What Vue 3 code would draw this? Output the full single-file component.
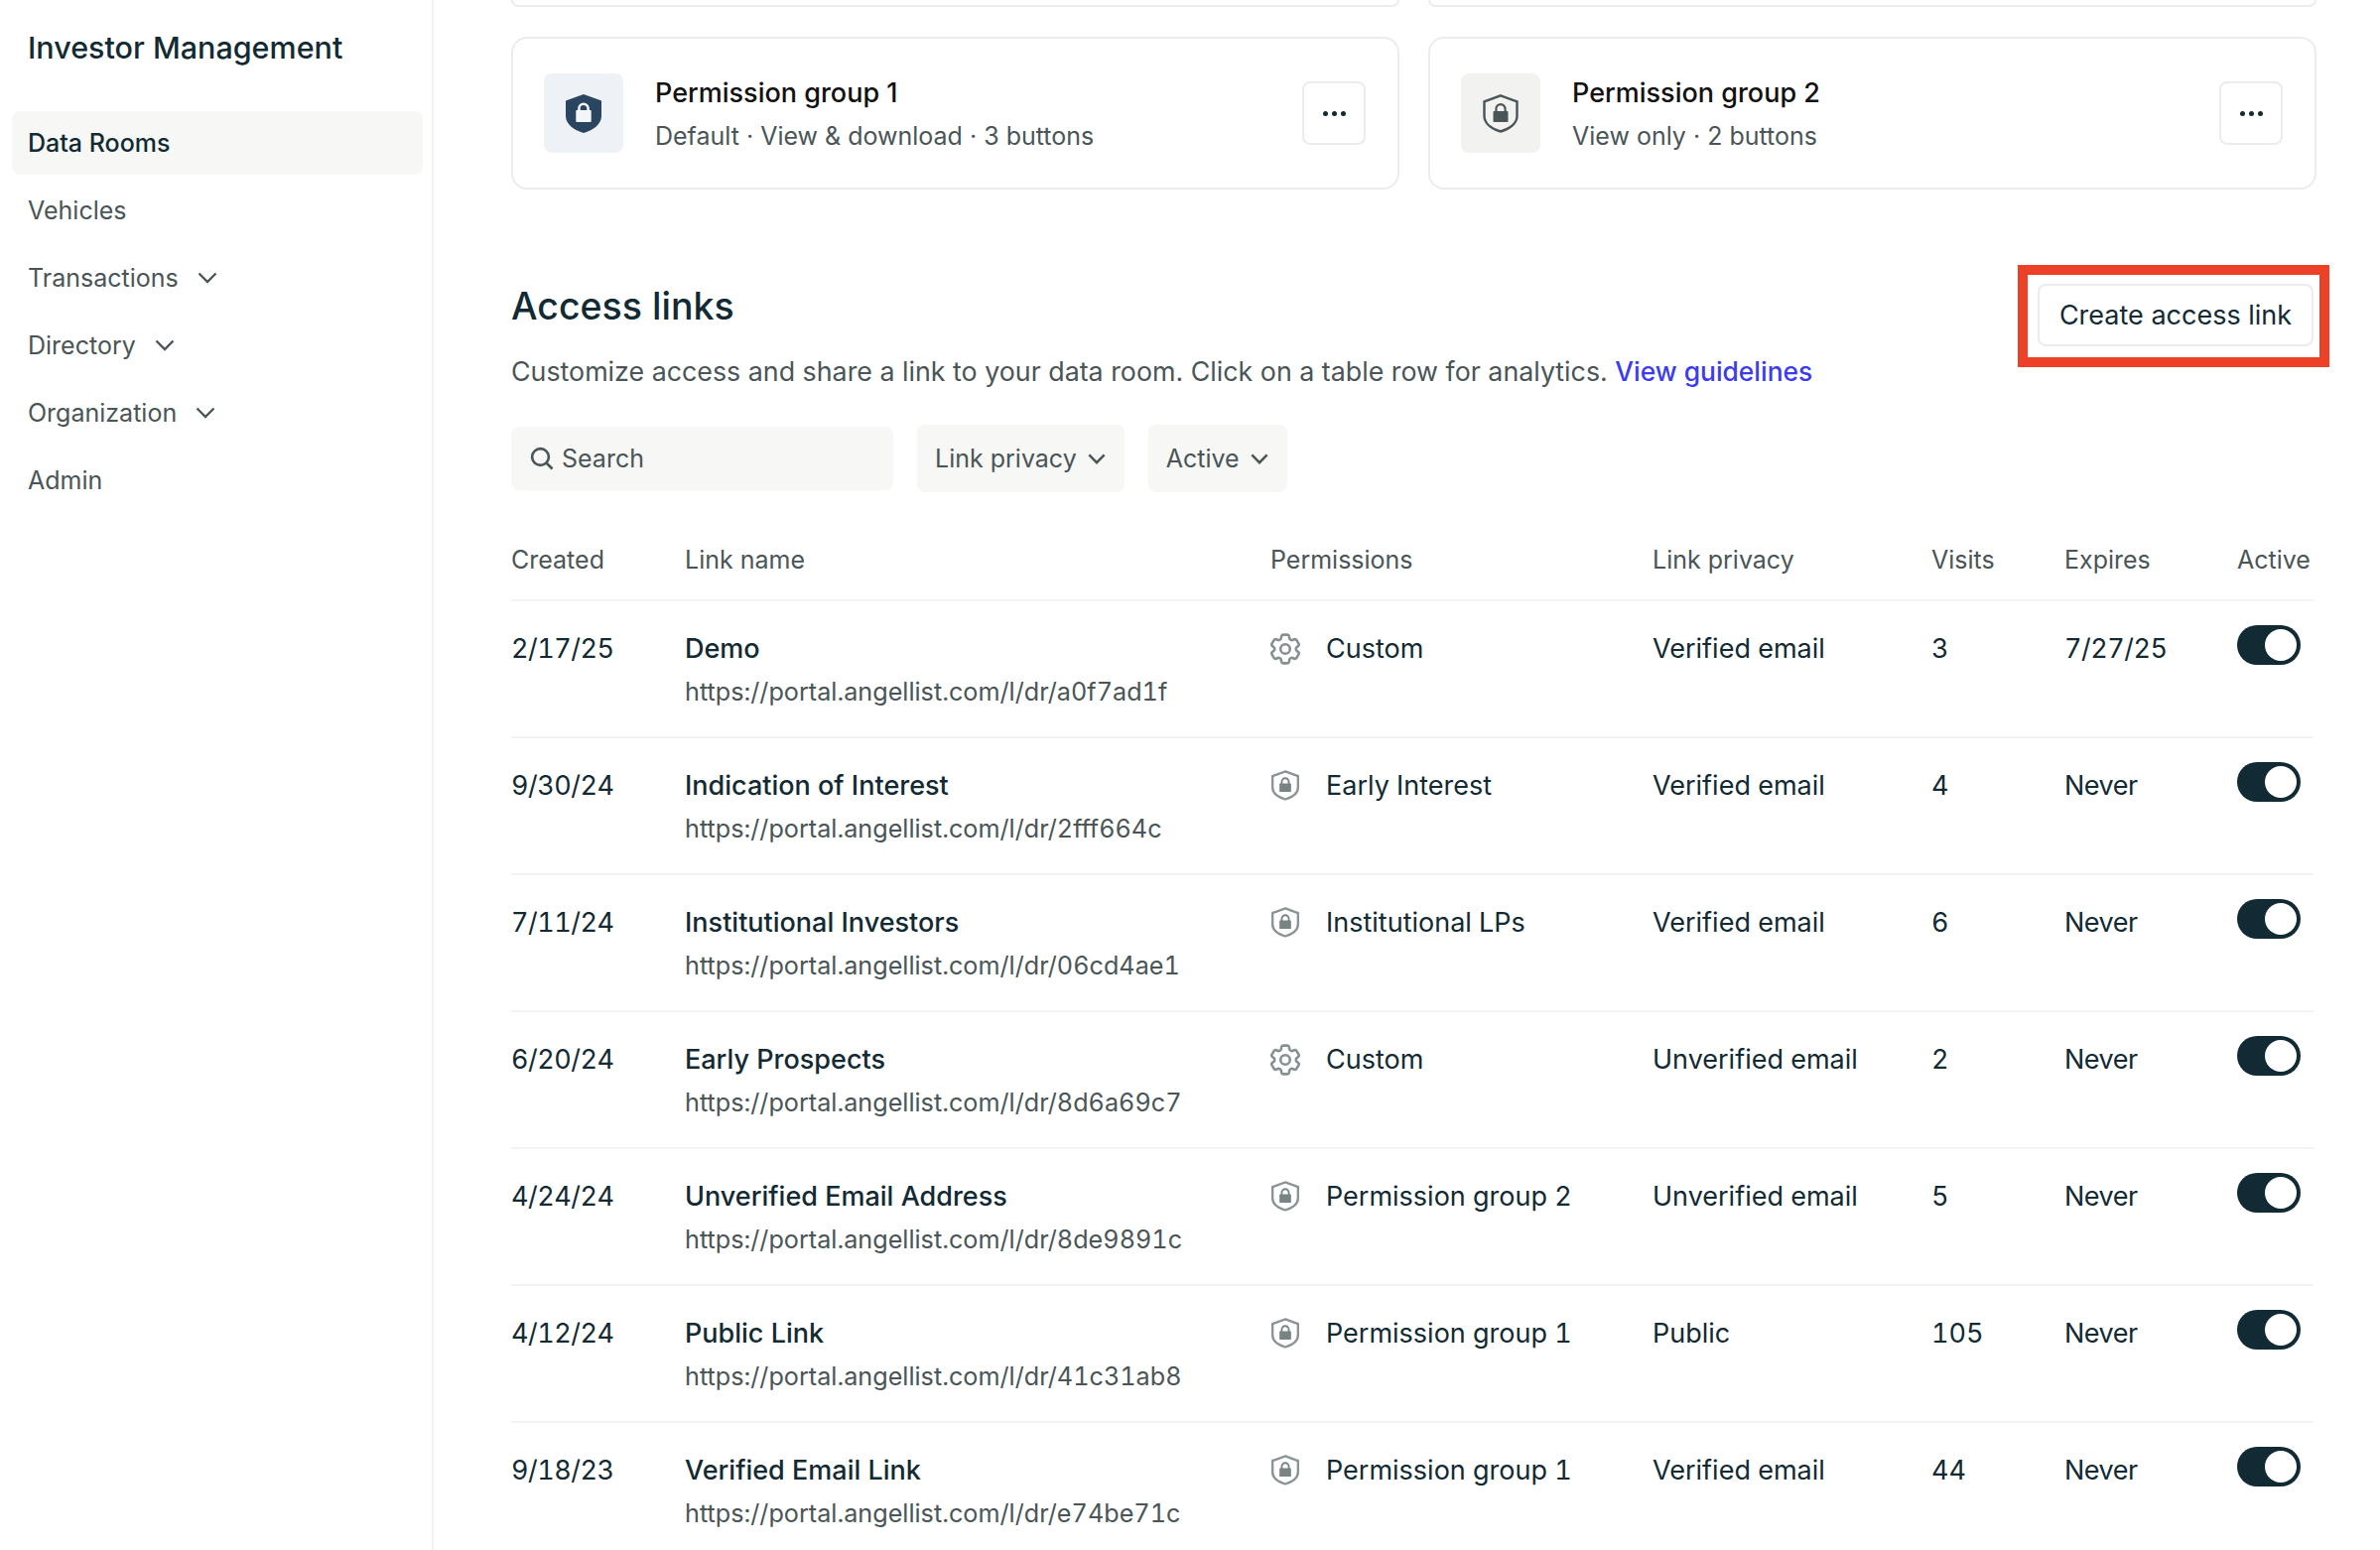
<script setup>
const nav = [
  { label: 'Data Rooms', active: true },
  { label: 'Vehicles' },
  { label: 'Transactions', caret: true },
  { label: 'Directory', caret: true },
  { label: 'Organization', caret: true },
  { label: 'Admin' }
]
const groups = [
  { name: 'Permission group 1', desc: 'Default · View & download · 3 buttons', primary: true },
  { name: 'Permission group 2', desc: 'View only · 2 buttons', primary: false }
]
const columns = ['Created', 'Link name', 'Permissions', 'Link privacy', 'Visits', 'Expires', 'Active']
const rows = [
  { created: '2/17/25', name: 'Demo', url: 'a0f7ad1f', icon: 'gear', perm: 'Custom', privacy: 'Verified email', visits: '3', expires: '7/27/25' },
  { created: '9/30/24', name: 'Indication of Interest', url: '2fff664c', icon: 'shield', perm: 'Early Interest', privacy: 'Verified email', visits: '4', expires: 'Never' },
  { created: '7/11/24', name: 'Institutional Investors', url: '06cd4ae1', icon: 'shield', perm: 'Institutional LPs', privacy: 'Verified email', visits: '6', expires: 'Never' },
  { created: '6/20/24', name: 'Early Prospects', url: '8d6a69c7', icon: 'gear', perm: 'Custom', privacy: 'Unverified email', visits: '2', expires: 'Never' },
  { created: '4/24/24', name: 'Unverified Email Address', url: '8de9891c', icon: 'shield', perm: 'Permission group 2', privacy: 'Unverified email', visits: '5', expires: 'Never' },
  { created: '4/12/24', name: 'Public Link', url: '41c31ab8', icon: 'shield', perm: 'Permission group 1', privacy: 'Public', visits: '105', expires: 'Never' },
  { created: '9/18/23', name: 'Verified Email Link', url: 'e74be71c', icon: 'shield', perm: 'Permission group 1', privacy: 'Verified email', visits: '44', expires: 'Never' }
]
const shieldFill = 'M18 0 36 6.5V22C36 30 28 36 18 39 8 36 0 30 0 22V6.5Z'
const shieldLine = 'M18 1.4 34.5 7.4V22C34.5 29 27.5 34.6 18 37.5 8.5 34.6 1.5 29 1.5 22V7.4Z'
const gearPath = 'M9.594 3.94c.09-.542.56-.94 1.11-.94h2.593c.55 0 1.02.398 1.11.94l.213 1.281c.063.374.313.686.645.87.074.04.147.083.22.127.325.196.72.257 1.075.124l1.217-.456a1.125 1.125 0 0 1 1.37.49l1.296 2.247a1.125 1.125 0 0 1-.26 1.431l-1.003.827c-.293.241-.438.613-.43.992a7.723 7.723 0 0 1 0 .255c-.008.378.137.75.43.991l1.004.827c.424.35.534.955.26 1.43l-1.298 2.247a1.125 1.125 0 0 1-1.369.491l-1.217-.456c-.355-.133-.75-.072-1.076.124a6.47 6.47 0 0 1-.22.128c-.331.183-.581.495-.644.869l-.213 1.281c-.09.543-.56.94-1.11.94h-2.594c-.55 0-1.019-.398-1.11-.94l-.213-1.281c-.062-.374-.312-.686-.644-.87a6.52 6.52 0 0 1-.22-.127c-.325-.196-.72-.257-1.076-.124l-1.217.456a1.125 1.125 0 0 1-1.369-.49l-1.297-2.247a1.125 1.125 0 0 1 .26-1.431l1.004-.827c.292-.24.437-.613.43-.991a6.932 6.932 0 0 1 0-.255c.007-.38-.138-.751-.43-.992l-1.004-.827a1.125 1.125 0 0 1-.26-1.43l1.297-2.247a1.125 1.125 0 0 1 1.37-.491l1.216.456c.356.133.751.072 1.076-.124.072-.044.146-.086.22-.128.332-.183.582-.495.644-.869l.214-1.28Z'
</script>

<template>
  <div class="page">
    <aside class="sidebar">
      <div class="brand">Investor Management</div>
      <nav class="nav">
        <div v-for="item in nav" :key="item.label" class="nav-item" :class="{ active: item.active }">
          <span>{{ item.label }}</span>
          <svg v-if="item.caret" class="nav-caret" viewBox="0 0 20 12" fill="none"><path d="M1.5 1.5 10 10l8.5-8.5" stroke="currentColor" stroke-width="2.4" /></svg>
        </div>
      </nav>
    </aside>

    <main class="main">
      <div class="stubs"><div class="stub"></div><div class="stub"></div></div>

      <div class="cards">
        <div v-for="g in groups" :key="g.name" class="card">
          <div class="card-icon" :class="{ primary: g.primary }">
            <svg class="card-shield" viewBox="0 0 36 39">
              <template v-if="g.primary">
                <path :d="shieldFill" fill="#2a4560" />
                <rect x="10.3" y="16" width="15.4" height="12" rx="0.8" fill="#f4f5f7" />
                <path d="M13.4 17V14.4a4.6 4.6 0 0 1 9.2 0V17" fill="none" stroke="#f4f5f7" stroke-width="2.6" />
              </template>
              <template v-else>
                <path :d="shieldLine" fill="none" stroke="#4a5557" stroke-width="2.4" />
                <rect x="10.5" y="17" width="15" height="11" rx="0.8" fill="#4a5557" />
                <path d="M13.4 18V14.8a4.6 4.6 0 0 1 9.2 0V18" fill="none" stroke="#4a5557" stroke-width="2.2" />
              </template>
            </svg>
          </div>
          <div class="card-text">
            <div class="card-name">{{ g.name }}</div>
            <div class="card-desc">{{ g.desc }}</div>
          </div>
          <button class="more" type="button">
            <i></i><i></i><i></i>
          </button>
        </div>
      </div>

      <section class="head">
        <div>
          <h2 class="title">Access links</h2>
          <p class="sub">Customize access and share a link to your data room. Click on a table row for analytics. <a class="link">View guidelines</a></p>
        </div>
        <div class="create-wrap">
          <button class="create" type="button">Create access link</button>
          <span class="annot"></span>
        </div>
      </section>

      <div class="filters">
        <div class="search">
          <svg class="search-icon" viewBox="0 0 24 24" fill="none"><circle cx="10.5" cy="10.5" r="8.4" stroke="currentColor" stroke-width="2.6" /><path d="m16.5 16.5 6 6" stroke="currentColor" stroke-width="2.6" /></svg>
          <span>Search</span>
        </div>
        <div class="select">
          <span>Link privacy</span>
          <svg class="select-caret" viewBox="0 0 20 12" fill="none"><path d="M1.5 1.5 10 10l8.5-8.5" stroke="currentColor" stroke-width="2.8" /></svg>
        </div>
        <div class="select">
          <span>Active</span>
          <svg class="select-caret" viewBox="0 0 20 12" fill="none"><path d="M1.5 1.5 10 10l8.5-8.5" stroke="currentColor" stroke-width="2.8" /></svg>
        </div>
      </div>

      <div class="table">
        <div class="tr th">
          <div v-for="c in columns" :key="c">{{ c }}</div>
        </div>
        <div v-for="r in rows" :key="r.url" class="tr td">
          <div class="date">{{ r.created }}</div>
          <div>
            <div class="name">{{ r.name }}</div>
            <div class="url">https://portal.angellist.com/l/dr/{{ r.url }}</div>
          </div>
          <div class="perm">
            <svg v-if="r.icon === 'gear'" class="perm-gear" viewBox="2.6 2.4 18.8 19.2" fill="none" stroke="#859090" stroke-width="1.6">
              <path :d="gearPath" />
              <circle cx="12" cy="12" r="3" />
            </svg>
            <svg v-else class="perm-shield" viewBox="0 0 36 39">
              <path :d="shieldLine" fill="none" stroke="#8a9494" stroke-width="3" />
              <rect x="10.5" y="17" width="15" height="11" rx="0.8" fill="#788384" />
              <path d="M13.4 18V14.8a4.6 4.6 0 0 1 9.2 0V18" fill="none" stroke="#788384" stroke-width="2.4" />
            </svg>
            <span>{{ r.perm }}</span>
          </div>
          <div>{{ r.privacy }}</div>
          <div>{{ r.visits }}</div>
          <div class="date">{{ r.expires }}</div>
          <div><span class="toggle"><span class="knob"></span></span></div>
        </div>
      </div>
    </main>
  </div>
</template>

<style>
html, body { margin: 0; background: #fff; }
</style>

<style scoped>
.page {
  display: flex;
  width: 2398px;
  height: 1562px;
  overflow: hidden;
  background: #fff;
  color: #122a33;
  font-family: Inter, "Noto Sans", sans-serif;
  font-size: 27px;
  line-height: 40px;
}
.sidebar {
  box-sizing: border-box;
  flex: none;
  width: 437px;
  padding: 0 9px 0 12px;
  border-right: 2px solid #f4f4f2;
}
.brand {
  padding: 28px 0 0 16px;
  height: 112px;
  box-sizing: border-box;
  font-size: 30.5px;
  font-weight: 500;
}
.nav { display: flex; flex-direction: column; gap: 4px; font-size: 25px; }
.nav-item {
  display: flex;
  align-items: center;
  gap: 19px;
  height: 64px;
  padding-left: 16px;
  border-radius: 8px;
  color: #4a5557;
}
.nav-item.active { background: #f7f7f5; color: #122a33; font-weight: 500; }
.nav-caret { width: 20px; height: 12px; }
.main {
  box-sizing: border-box;
  flex: 1;
  min-width: 0;
  padding: 0 63px 0 78px;
}
.stubs { display: grid; grid-template-columns: 895px 895px; gap: 29px; }
.stub {
  box-sizing: border-box;
  height: 7px;
  border: 2px solid #ececea;
  border-top: 0;
  border-radius: 0 0 16px 16px;
}
.cards { display: grid; grid-template-columns: 895px 895px; gap: 29px; margin-top: 30px; }
.card {
  box-sizing: border-box;
  display: flex;
  align-items: center;
  height: 154px;
  padding: 0 32px 0 31px;
  border: 2px solid #ececea;
  border-radius: 16px;
}
.card-icon {
  flex: none;
  display: flex;
  align-items: center;
  justify-content: center;
  width: 80px;
  height: 80px;
  margin-right: 32px;
  border-radius: 8px;
  background: #f2f2f0;
}
.card-icon.primary { background: #eef1f6; }
.card-shield { width: 36px; height: 39px; }
.card-text { flex: 1; min-width: 0; padding-top: 2px; }
.card-name { font-weight: 500; color: #111; }
.card-desc { margin-top: 3px; color: #4a5557; font-size: 25px; }
.more {
  flex: none;
  display: flex;
  align-items: center;
  justify-content: center;
  gap: 4px;
  width: 64px;
  height: 64px;
  padding: 0;
  background: #fff;
  border: 2px solid #ececea;
  border-radius: 8px;
}
.more i { width: 5px; height: 5px; border-radius: 50%; background: #122a33; }
.head {
  display: flex;
  justify-content: space-between;
  align-items: flex-start;
  margin-top: 94px;
}
.title {
  margin: 0;
  font-size: 37.5px;
  line-height: 48px;
  font-weight: 500;
}
.sub { margin: 21px 0 0; color: #4a5557; font-size: 26.8px; }
.link { color: #3b3bf0; font-weight: 500; font-size: 26.4px; }
.create-wrap { position: relative; margin: 1px 4px 0 0; }
.create {
  display: block;
  box-sizing: border-box;
  width: 278px;
  height: 63px;
  padding: 0;
  background: #fff;
  border: 2px solid #ececea;
  border-radius: 8px;
  color: #122a33;
  font: inherit;
}
.annot {
  position: absolute;
  inset: -19px -16px -21px -20px;
  border: 10px solid #ec4126;
}
.filters {
  display: flex;
  align-items: center;
  gap: 24px;
  margin-top: 34px;
  color: #4a5557;
  font-size: 25px;
}
.search {
  display: flex;
  align-items: center;
  gap: 8px;
  box-sizing: border-box;
  width: 385px;
  height: 64px;
  padding-left: 19px;
  border-radius: 8px;
  background: #f7f7f5;
}
.search-icon { width: 24px; height: 24px; }
.select {
  display: flex;
  align-items: center;
  gap: 11px;
  box-sizing: border-box;
  height: 68px;
  padding: 0 19px 0 18px;
  border-radius: 8px;
  background: #f7f7f5;
}
.select-caret { width: 18px; height: 11px; }
.tr {
  display: grid;
  grid-template-columns: 175px 590px 385px 281px 134px 174px 77px;
  box-sizing: border-box;
  width: 1816px;
  border-bottom: 2px solid #f2f2f1;
}
.th { margin-top: 48px; height: 62px; padding-bottom: 20px; color: #4a5557; font-size: 25px; }
.td { height: 138px; padding-top: 28px; font-variant-numeric: tabular-nums; }
.date { letter-spacing: -0.5px; }
.name { font-weight: 500; }
.url { margin-top: 3px; color: #4a5557; font-size: 25.2px; }
.perm { display: flex; align-items: flex-start; }
.perm-gear { flex: none; width: 30px; height: 32px; margin: 4px 26px 0 0; }
.perm-shield { flex: none; width: 28px; height: 31px; margin: 4px 27px 0 1px; }
.toggle {
  display: flex;
  justify-content: flex-end;
  align-items: center;
  box-sizing: border-box;
  width: 64px;
  height: 40px;
  margin-top: -4px;
  padding-right: 4px;
  border-radius: 20px;
  background: #122a33;
}
.knob { width: 32px; height: 32px; border-radius: 50%; background: #fff; }
</style>
